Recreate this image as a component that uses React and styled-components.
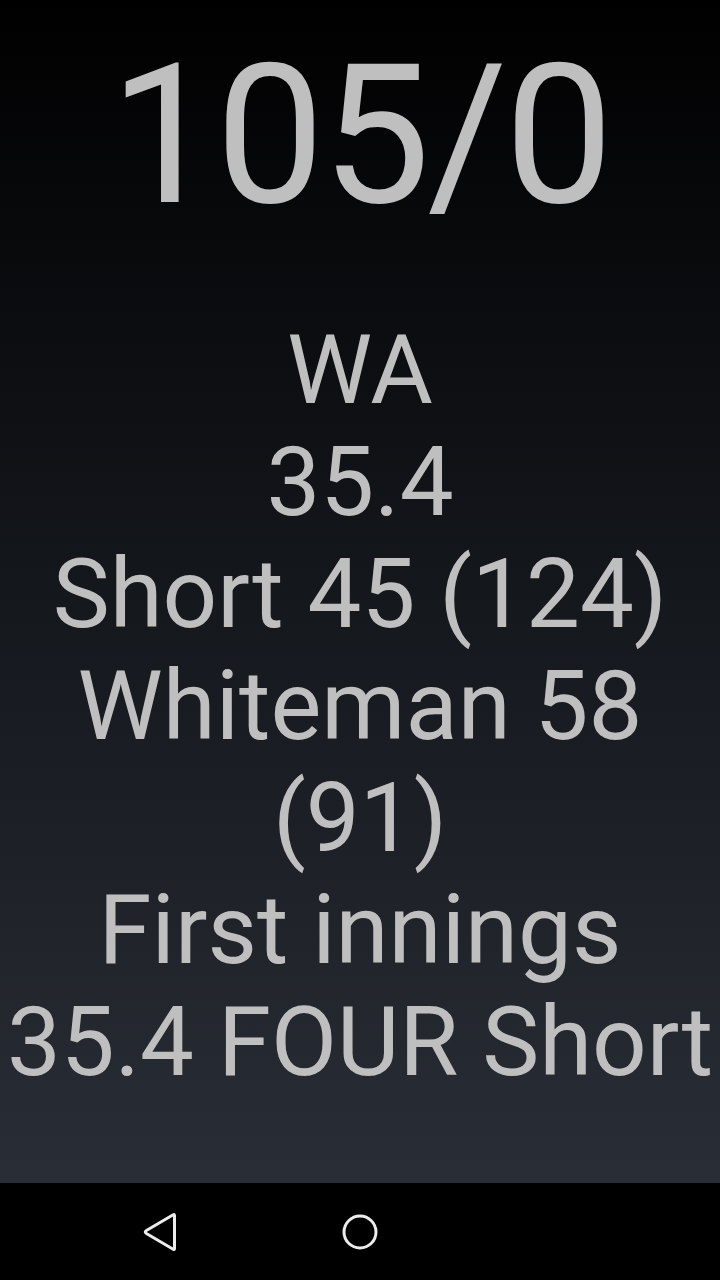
import React from "react";
import styled, { createGlobalStyle } from "styled-components";

const GlobalStyle = createGlobalStyle`
  html, body {
    margin: 0;
    padding: 0;
    background: #000;
  }
  body {
    font-family: Roboto, "Noto Sans", sans-serif;
  }
`;

const lines = [
  "WA",
  "35.4",
  "Short 45 (124)",
  "Whiteman 58",
  "(91)",
  "First innings",
  "35.4 FOUR Short",
];

const App = () => {
  return (
    <Screen>
      <GlobalStyle />
      <Board>
        <Score>105/0</Score>
        <Details>
          {lines.map((line, i) => (
            <Line key={i}>{line}</Line>
          ))}
        </Details>
      </Board>
      <NavBar>
        <NavButton aria-label="Back">
          <svg width="40" height="40" viewBox="0 0 40 40">
            <path
              d="M34.5 3.5 L34.5 36.5 Q34.5 38.2 33.2 37.2 L6 21.2 Q4.6 20 6 18.8 L33.2 2.8 Q34.5 1.8 34.5 3.5 Z"
              fill="none"
              stroke="#ececec"
              strokeWidth="3"
              strokeLinejoin="round"
            />
          </svg>
        </NavButton>
        <NavButton aria-label="Home">
          <svg width="40" height="40" viewBox="0 0 40 40">
            <circle cx="20" cy="20" r="16" fill="none" stroke="#ececec" strokeWidth="3" />
          </svg>
        </NavButton>
        <NavButton aria-hidden="true" />
      </NavBar>
    </Screen>
  );
};

const Screen = styled.div`
  width: 720px;
  height: 1280px;
  display: flex;
  flex-direction: column;
  overflow: hidden;
`;

const Board = styled.div`
  flex: 1;
  display: flex;
  flex-direction: column;
  align-items: center;
  padding-top: 22px;
  background: linear-gradient(180deg, #000000 0%, #14171c 50%, #292d35 100%);
  color: #bfbfbf;
  text-align: center;
`;

const Score = styled.div`
  font-size: 194px;
  line-height: normal;
  letter-spacing: -3px;
  white-space: nowrap;
`;

const Details = styled.div`
  margin-top: 65px;
  display: flex;
  flex-direction: column;
  align-items: center;
`;

const Line = styled.div`
  font-size: 96px;
  line-height: normal;
  white-space: nowrap;
`;

const NavBar = styled.div`
  height: 97px;
  background: #000;
  display: grid;
  grid-template-columns: repeat(3, 200px);
  justify-content: center;
  align-items: center;
`;

const NavButton = styled.div`
  display: flex;
  justify-content: center;
  align-items: center;
  height: 40px;
`;

export default App;
